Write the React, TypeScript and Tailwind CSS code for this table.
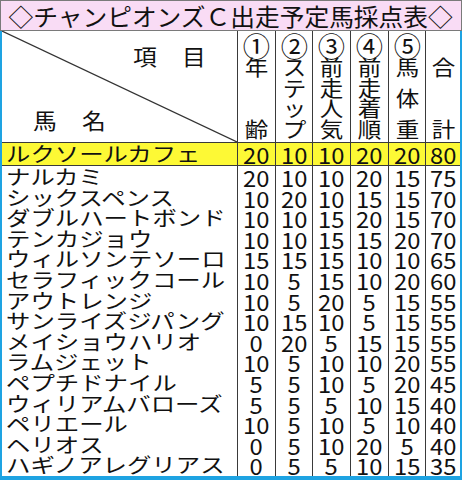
import React from 'react';

type Row = { name: string; s: number[]; total: number; top?: boolean };

const rows: Row[] = [
  { name: 'ルクソールカフェ', s: [20, 10, 10, 20, 20], total: 80, top: true },
  { name: 'ナルカミ', s: [20, 10, 10, 20, 15], total: 75 },
  { name: 'シックスペンス', s: [10, 20, 10, 15, 15], total: 70 },
  { name: 'ダブルハートボンド', s: [10, 10, 15, 20, 15], total: 70 },
  { name: 'テンカジョウ', s: [10, 10, 15, 15, 20], total: 70 },
  { name: 'ウィルソンテソーロ', s: [15, 15, 15, 10, 10], total: 65 },
  { name: 'セラフィックコール', s: [10, 5, 15, 10, 20], total: 60 },
  { name: 'アウトレンジ', s: [10, 5, 20, 5, 15], total: 55 },
  { name: 'サンライズジパング', s: [10, 15, 10, 5, 15], total: 55 },
  { name: 'メイショウハリオ', s: [0, 20, 5, 15, 15], total: 55 },
  { name: 'ラムジェット', s: [10, 5, 10, 10, 20], total: 55 },
  { name: 'ペプチドナイル', s: [5, 5, 10, 5, 20], total: 45 },
  { name: 'ウィリアムバローズ', s: [5, 5, 5, 10, 15], total: 40 },
  { name: 'ペリエール', s: [10, 5, 10, 5, 10], total: 40 },
  { name: 'ヘリオス', s: [0, 5, 10, 20, 5], total: 40 },
  { name: 'ハギノアレグリアス', s: [0, 5, 5, 10, 15], total: 35 },
];

const heads = [
  { num: '①', chars: ['年', '齢'], spread: true },
  { num: '②', chars: ['ス', 'テ', 'ッ', 'プ'], spread: false },
  { num: '③', chars: ['前', '走', '人', '気'], spread: false },
  { num: '④', chars: ['前', '走', '着', '順'], spread: false },
  { num: '⑤', chars: ['馬', '体', '重'], spread: true },
  { num: '', chars: ['合', '計'], spread: true },
];

const grid = 'grid grid-cols-[235px_38px_37px_38px_38px_37px_1fr]';

function HeadCol({ num, chars, spread }: { num: string; chars: string[]; spread: boolean }) {
  return (
    <div className="border-l border-[#3a3a3a] flex flex-col items-center pt-[3px]">
      <div className="h-[22px] flex items-center justify-center">
        <span className="inline-block text-[21px] leading-none scale-[1.3]">{num}</span>
      </div>
      <div className={spread ? 'h-[82px] flex flex-col items-center justify-between' : 'h-[82px] flex flex-col items-center'}>
        {chars.map((c, i) => (
          <span key={i} className="h-[20.5px] text-[21px] leading-[20.5px] inline-block scale-x-[1.12]">
            {c}
          </span>
        ))}
      </div>
    </div>
  );
}

export default function App() {
  return (
    <div className="w-[462px] h-[480px] bg-white text-[#111] font-['Noto_Sans_CJK_JP',sans-serif] flex flex-col overflow-hidden">
      <div className="h-[31px] border border-[#7a7a7a] bg-[#f9dcf5] flex items-center justify-center overflow-hidden">
        <span className="whitespace-nowrap text-[24px] leading-none inline-block scale-x-[1.03]">
          ◇チャンピオンズＣ出走予定馬採点表◇
        </span>
      </div>
      <div className="flex-1 border-x-2 border-b-4 border-[#1ea3e2] flex flex-col">
        <div className={`${grid} h-[112px] border-b border-[#3a3a3a]`}>
          <div className="relative flex flex-col justify-between pt-[13px] pb-[12px] text-[22px] leading-none">
            <svg className="absolute left-0 top-0 w-[235px] h-[111px]" width="235" height="111">
              <line x1="0" y1="0" x2="235" y2="111" stroke="#333" strokeWidth="1.2" />
            </svg>
            <div className="relative flex gap-[27px] pl-[132px]">
              <span className="inline-block scale-x-[1.08]">項</span>
              <span className="inline-block scale-x-[1.08]">目</span>
            </div>
            <div className="relative flex gap-[27px] pl-[32px]">
              <span className="inline-block scale-x-[1.08]">馬</span>
              <span className="inline-block scale-x-[1.08]">名</span>
            </div>
          </div>
          {heads.map((h, i) => (
            <HeadCol key={i} num={h.num} chars={h.chars} spread={h.spread} />
          ))}
        </div>
        {rows.map((r) => (
          <div
            key={r.name}
            className={
              r.top
                ? `${grid} h-[23px] bg-[#fdf935] border-b border-[#3a3a3a]`
                : `${grid} h-[20.6px]`
            }
          >
            <div className="flex items-center pl-[4px] overflow-visible">
              <span className="inline-block origin-left scale-x-[1.22] text-[20px] leading-none whitespace-nowrap">
                {r.name}
              </span>
            </div>
            {[...r.s, r.total].map((v, i) => (
              <div key={i} className="border-l border-[#3a3a3a] flex items-center justify-center">
                <span className="inline-block scale-x-[1.08] text-[22px] leading-none">{v}</span>
              </div>
            ))}
          </div>
        ))}
      </div>
    </div>
  );
}
